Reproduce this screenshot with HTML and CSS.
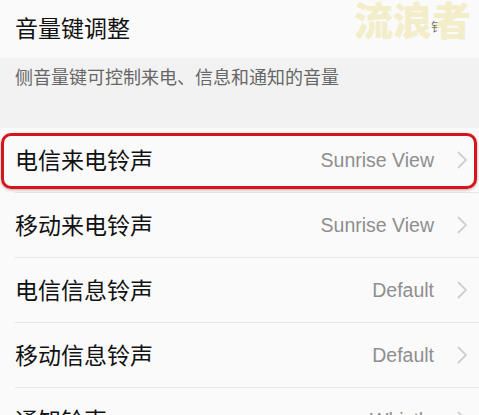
FILE: index.html
```html
<!DOCTYPE html>
<html lang="zh">
<head>
<meta charset="utf-8">
<link rel="stylesheet" href="styles.css">
</head>
<body>
<div class="page">
  <div class="header">
    <span class="title">音量键调整</span>
    <span class="watermark">流浪者</span>
    <span class="cut">钅</span>
  </div>
  <div class="note">侧音量键可控制来电、信息和通知的音量</div>
  <div class="list">
    <div class="row"><span class="label">电信来电铃声</span><span class="value">Sunrise View</span><svg class="chev" viewBox="0 0 12 20"><path d="M2 2 L10 10 L2 18" fill="none" stroke="#cfcfcf" stroke-width="1.8"/></svg></div>
    <div class="row"><span class="label">移动来电铃声</span><span class="value">Sunrise View</span><svg class="chev" viewBox="0 0 12 20"><path d="M2 2 L10 10 L2 18" fill="none" stroke="#cfcfcf" stroke-width="1.8"/></svg></div>
    <div class="row"><span class="label">电信信息铃声</span><span class="value">Default</span><svg class="chev" viewBox="0 0 12 20"><path d="M2 2 L10 10 L2 18" fill="none" stroke="#cfcfcf" stroke-width="1.8"/></svg></div>
    <div class="row"><span class="label">移动信息铃声</span><span class="value">Default</span><svg class="chev" viewBox="0 0 12 20"><path d="M2 2 L10 10 L2 18" fill="none" stroke="#cfcfcf" stroke-width="1.8"/></svg></div>
    <div class="row"><span class="label">通知铃声</span><span class="value">Whistle</span><svg class="chev" viewBox="0 0 12 20"><path d="M2 2 L10 10 L2 18" fill="none" stroke="#cfcfcf" stroke-width="1.8"/></svg></div>
  </div>
  <div class="highlight"></div>
</div>
</body>
</html>
```
FILE: styles.css
```css
html, body {
  margin: 0;
  padding: 0;
  background: #fafafa;
  overflow: hidden;
}
.page {
  position: relative;
  width: 479px;
  height: 415px;
  overflow: hidden;
  font-family: "Noto Sans CJK SC", "Noto Sans", sans-serif;
}
.header {
  height: 58px;
  background: #fafafa;
  display: flex;
  align-items: center;
  padding-left: 15px;
  position: relative;
}
.title {
  font-size: 23px;
  color: #111;
  line-height: 1;
  margin-top: -4px;
}
.cut {
  position: absolute;
  left: 431px;
  top: 18px;
  font-size: 12px;
  color: #777;
}
.watermark {
  position: absolute;
  right: 8px;
  top: -10px;
  font-size: 39px;
  font-weight: 900;
  color: #f3edc9;
}
.note {
  height: 70px;
  background: #f2f2f2;
  box-sizing: border-box;
  padding: 6px 0 0 15px;
  font-size: 18px;
  line-height: 24px;
  color: #666;
}
.list {
  background: #fafafa;
}
.row {
  height: 65px;
  margin-left: 15px;
  padding-right: 11px;
  box-sizing: border-box;
  border-bottom: 1px solid #e6e6e6;
  display: flex;
  align-items: center;
}
.label {
  font-size: 23px;
  color: #111;
  flex: 1;
  margin-top: -2px;
}
.value {
  font-family: "Liberation Sans", Arial, sans-serif;
  font-size: 19.5px;
  color: #8e8e8e;
  margin-right: 22px;
}
.chev {
  width: 12px;
  height: 20px;
  display: block;
}
.highlight {
  position: absolute;
  left: 1px;
  top: 133px;
  width: 476px;
  height: 56px;
  box-sizing: border-box;
  border: 3px solid #d3151d;
  border-radius: 10px;
  box-shadow: 0 1px 3px rgba(120, 0, 0, 0.35);
}
```
